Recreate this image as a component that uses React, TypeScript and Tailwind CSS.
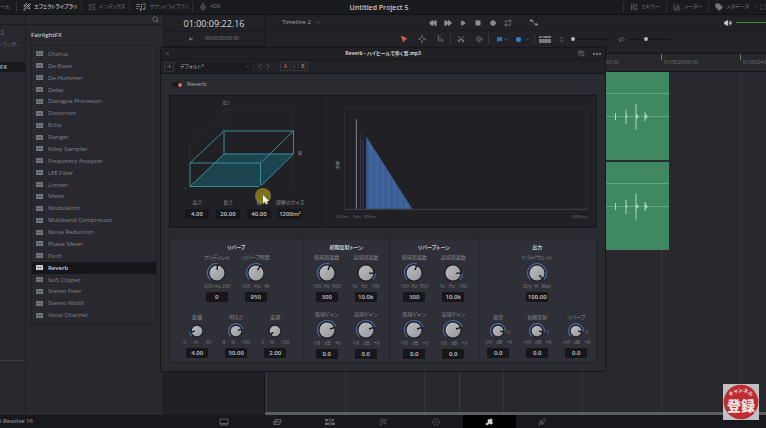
import React, { useId } from "react";
import {
  ChevronDown,
  ChevronLeft,
  ChevronRight,
  ChevronsUpDown,
  Circle,
  CodeXml,
  FastForward,
  History,
  ListOrdered,
  Magnet,
  Maximize,
  Mic,
  MousePointer2,
  Play,
  Plus,
  Repeat,
  Rewind,
  Rocket,
  Scissors,
  Search,
  SkipForward,
  SlidersVertical,
  Square,
  Tag,
  Volume2,
  WandSparkles,
  X,
  BarChart3,
  Music,
} from "lucide-react";

const effects = [
  "Chorus", "De-Esser", "De-Hummer", "Delay", "Dialogue Processor", "Distortion", "Echo", "Flanger",
  "Foley Sampler", "Frequency Analyzer", "LFE Filter", "Limiter", "Meter", "Modulation",
  "Multiband Compressor", "Noise Reduction", "Phase Meter", "Pitch", "Reverb", "Soft Clipper",
  "Stereo Fixer", "Stereo Width", "Vocal Channel",
];

function point(c: number, r: number, deg: number) {
  const a = (deg * Math.PI) / 180;
  return [c + r * Math.sin(a), c - r * Math.cos(a)];
}

function Dial({ small, angle, from = -135 }: { small?: boolean; angle: number; from?: number }) {
  const c = small ? 9 : 11;
  const r = small ? 5.7 : 7.9;
  const lo = Math.min(from, angle);
  const hi = Math.max(from, angle);
  const [x1, y1] = point(c, r + 1.6, lo);
  const [x2, y2] = point(c, r + 1.6, hi);
  const [px, py] = point(c, r + 0.6, angle);
  const [qx, qy] = point(c, r * 0.4, angle);
  const id = useId();
  return (
    <svg viewBox={`0 0 ${c * 2} ${c * 2}`} className={small ? "size-[18px]" : "size-[22px]"} aria-hidden="true">
      <defs>
        <linearGradient id={id} x1="0" y1="0" x2="1" y2="1">
          <stop offset="0" stopColor="#bcbec0" />
          <stop offset="1" stopColor="#96989b" />
        </linearGradient>
      </defs>
      <circle cx={c} cy={c} r={r + 0.8} fill="#1b1c22" />
      {hi - lo > 2 && (
        <path
          d={`M${x1} ${y1}A${r + 1.6} ${r + 1.6} 0 ${hi - lo > 180 ? 1 : 0} 1 ${x2} ${y2}`}
          fill="none"
          stroke="#4d6fae"
          strokeWidth="1.1"
        />
      )}
      <circle cx={c} cy={c} r={r - 0.4} fill={`url(#${id})`} />
      <path d={`M${px} ${py}L${qx} ${qy}`} stroke="#15161a" strokeWidth="1.4" />
    </svg>
  );
}

type KnobProps = {
  label: string;
  scale: [string, string, string];
  value: string;
  angle: number;
  from?: number;
  small?: boolean;
  mark?: string;
};

function Knob({ label, scale, value, angle, from, small, mark }: KnobProps) {
  const id = useId();
  return (
    <div className="flex w-[39px] flex-col items-center">
      <label htmlFor={id} className="h-2 text-[5px] leading-[8px] whitespace-nowrap text-[#8b8c92]">
        {label}
      </label>
      <div className="relative mt-px">
        <Dial small={small} angle={angle} from={from} />
        {mark && <span className="absolute top-2 left-full text-[5px] leading-[5px] text-[#74757b]">{mark}</span>}
      </div>
      <div className="flex h-[5px] w-7 justify-between text-[5px] leading-[5px] text-[#7b7c82]">
        {scale.map((s) => (
          <span key={s}>{s}</span>
        ))}
      </div>
      <input
        id={id}
        defaultValue={value}
        className="mt-[3px] h-2.5 w-[22px] rounded-[1px] bg-[#17171b] text-center text-[6px] font-semibold text-[#c6c7ca]"
      />
    </div>
  );
}

function Section({ title, top, bottom, tall }: { title: string; top: KnobProps[]; bottom: KnobProps[]; tall?: boolean }) {
  return (
    <section className="border-l border-[#222329] pt-0.5 first:border-l-0">
      <h3 className="text-center text-[5px] leading-[12px] font-semibold text-[#c9cacd]">{title}</h3>
      <div className="flex justify-center">
        {top.map((k) => (
          <Knob key={k.label} {...k} />
        ))}
      </div>
      <div className={tall ? "mt-2 flex justify-center" : "mt-[11px] flex justify-center"}>
        {bottom.map((k) => (
          <Knob key={k.label} {...k} small={!tall} />
        ))}
      </div>
    </section>
  );
}

const toneTop: KnobProps[] = [
  { label: "低域周波数", scale: ["160", "Hz", "500"], value: "300", angle: 20 },
  { label: "高域周波数", scale: ["1k", "Hz", "16k"], value: "10.0k", angle: 92, from: 135 },
];
const toneBottom: KnobProps[] = [
  { label: "低域ゲイン", scale: ["-18", "dB", "+6"], value: "0.0", angle: 72 },
  { label: "高域ゲイン", scale: ["-18", "dB", "+6"], value: "0.0", angle: 72 },
];

function TabButton({ icon, label, active }: { icon: React.ReactNode; label: string; active?: boolean }) {
  return (
    <button
      className={
        "flex h-2.5 items-center gap-[3px] border-l border-[#303136] pr-1 pl-1.5 text-[5px] whitespace-nowrap " +
        (active ? "font-medium text-[#c8c9cc]" : "text-[#75767b]")
      }
    >
      {icon}
      {label}
    </button>
  );
}

function SoundLibraryIcon() {
  return (
    <svg viewBox="0 0 10 8" className="h-2 w-2.5" fill="none" stroke="currentColor" strokeWidth=".9" aria-hidden="true">
      <path d="M0 1.500h4.500M0 3.500h4M0 5.500h2.500M5.500 6.500V1.500l3.500-.8v5" />
      <circle cx="4.700" cy="6.600" r=".8" fill="currentColor" />
      <circle cx="8.200" cy="5.900" r=".8" fill="currentColor" />
    </svg>
  );
}

function TopBar() {
  return (
    <header className="grid h-[15px] shrink-0 grid-cols-[1fr_auto_1fr] items-center border-b border-[#111215] bg-[#1a1b1e]">
      <nav className="flex items-center">
        <span className="w-4 text-[5px] text-[#75767b]">ール</span>
        <TabButton active icon={<WandSparkles className="size-2" />} label="エフェクトライブラリ" />
        <TabButton icon={<ListOrdered className="size-2" />} label="インデックス" />
        <TabButton icon={<SoundLibraryIcon />} label="サウンドライブラリ" />
        <TabButton icon={<Mic className="size-2" />} label="ADR" />
      </nav>
      <h1 className="pr-2 text-[7px] leading-none font-semibold text-[#c8c9cc]">Untitled Project 5</h1>
      <nav className="flex items-center justify-end gap-x-0.5">
        <TabButton icon={<SlidersVertical className="size-2" />} label="ミキサー" />
        <TabButton icon={<BarChart3 className="size-2" />} label="メーター" />
        <TabButton icon={<Tag className="size-2 fill-current" />} label="メタデータ" />
        <button aria-label="全画面" className="border-l border-[#303136] pl-1 text-[#75767b]">
          <Maximize className="size-1.5" />
        </button>
      </nav>
    </header>
  );
}

function EffectsLibrary() {
  return (
    <>
      <aside className="flex w-[26px] shrink-0 flex-col overflow-hidden border-r border-[#1d1d22] text-[5px] text-[#76777d]">
        <div className="h-2.5 shrink-0 border-b border-[#1d1d22]" />
        <span className="mt-px h-3 leading-[12px]">ス</span>
        <span className="h-3 leading-[12px] whitespace-nowrap">・ラング...</span>
        <span className="mt-3 h-2.5 bg-[#1a1a1e] text-[6px] leading-[10px] font-semibold text-[#c8c9cc]">FX</span>
        <div className="mt-[288px] border-t border-[#3b3c43]" />
      </aside>
      <aside className="flex w-[138px] shrink-0 flex-col border-r border-[#1a1a1f]">
        <div className="flex h-2.5 shrink-0 items-center justify-end border-b border-[#1d1d22] pr-1">
          <button aria-label="検索" className="text-[#8b8c92]">
            <Search className="size-[7px]" />
          </button>
        </div>
        <h2 className="mt-1 pl-[5px] text-[6px] leading-[12px] font-semibold text-[#c8c9cc]">FairlightFX</h2>
        <ul className="mt-1 mr-1.5 ml-[5px] flex h-[279px] flex-col border border-[#1d1d22] py-[2px]">
          {effects.map((name) => {
            const on = name === "Reverb";
            return (
              <li key={name} className="flex min-h-0 flex-1">
                <button
                  className={
                    "flex flex-1 items-center gap-[5px] pl-1 text-[6px] leading-none whitespace-nowrap " +
                    (on ? "bg-[#16161a] font-semibold text-[#d2d3d6]" : "text-[#85868c]")
                  }
                >
                  <svg viewBox="0 0 7 5" className="h-[5px] w-[7px]" aria-hidden="true">
                    <rect width="7" height="5" rx=".5" fill={on ? "#d2d3d6" : "#777980"} />
                    <path d="M1 2.500h1M2.500 1.300v2.400M3.500 2v1M4.500 1.300v2.400M5.200 2.500H6" stroke="#36373d" strokeWidth=".5" />
                  </svg>
                  {name}
                </button>
              </li>
            );
          })}
        </ul>
      </aside>
    </>
  );
}

function ToolButton({ label, children, className = "w-[15px]" }: { label: string; children: React.ReactNode; className?: string }) {
  return (
    <button aria-label={label} className={"flex shrink-0 items-center justify-center " + className}>
      {children}
    </button>
  );
}

const range =
  "h-2 appearance-none bg-[linear-gradient(#17171b,#17171b)] bg-[length:100%_1px] bg-center bg-no-repeat [&::-webkit-slider-thumb]:size-1 [&::-webkit-slider-thumb]:appearance-none [&::-webkit-slider-thumb]:rounded-full [&::-webkit-slider-thumb]:bg-[#b7b8bb]";

function Toolbars() {
  return (
    <div className="flex h-8 shrink-0 bg-[#222226]">
      <div className="flex w-[101px] flex-col items-center border-r border-b border-[#18181c]">
        <div className="flex h-[17px] w-full items-center justify-center border-b border-[#1b1b1f] text-[9px] leading-none font-medium text-[#d6d7da]">
          01:00:09:22.16
        </div>
        <div className="flex flex-1 items-center gap-3 text-[5px] text-[#84858a]">
          <SkipForward className="size-1 fill-current" />
          00:00:00:00.00
        </div>
      </div>
      <div className="flex min-w-0 flex-1 flex-col text-[#8e8f94]">
        <div className="flex h-4 items-center border-b border-[#1b1b1f]">
          <button className="ml-[17px] flex w-[143px] items-center gap-1 text-[6px] text-[#a4a5aa]">
            Timeline 2 <ChevronDown className="size-[5px]" />
          </button>
          <ToolButton label="巻き戻し"><Rewind className="size-2 fill-current" /></ToolButton>
          <ToolButton label="早送り"><FastForward className="size-2 fill-current" /></ToolButton>
          <ToolButton label="再生"><Play className="size-1.5 fill-current" /></ToolButton>
          <ToolButton label="停止"><Square className="size-1.5 fill-current" /></ToolButton>
          <ToolButton label="録音"><Circle className="size-1.5 fill-current" /></ToolButton>
          <ToolButton label="ループ"><Repeat className="size-2" /></ToolButton>
          <ToolButton label="オートメーション" className="w-9">
            <svg viewBox="0 0 11 7" className="h-[7px] w-[11px]">
              <path d="M1.500 1.500H4C6 1.500 5.500 5.500 7.500 5.500H10" fill="none" stroke="currentColor" strokeWidth=".7" />
              <circle cx="3.300" cy="1.500" r="1.200" fill="currentColor" />
              <circle cx="8.300" cy="5.500" r="1.200" fill="currentColor" />
            </svg>
          </ToolButton>
          <button aria-label="ミュート" className="mr-1 ml-auto text-[#d6d7da]">
            <Volume2 className="size-2 fill-current" />
          </button>
          <div className="h-px w-[30px] bg-[#3c8a36]" />
        </div>
        <div className="flex h-4 items-center">
          <ToolButton label="選択" className="ml-[130px] w-[18px] text-[#e0604a]"><MousePointer2 className="size-2 fill-current" /></ToolButton>
          <ToolButton label="範囲" className="w-[18px]">
            <svg viewBox="0 0 8 8" className="size-2"><path d="M4 0v3M4 5v3M0 4h3M5 4h3" stroke="currentColor" strokeWidth=".9" /></svg>
          </ToolButton>
          <ToolButton label="編集" className="w-[18px]">
            <svg viewBox="0 0 8 8" className="size-2 opacity-60">
              <path d="M1 1h4M1 3.500h3M2.500 1v5h2M5 3l2.500 2.500-1.500.3L5.500 7z" fill="none" stroke="currentColor" strokeWidth=".8" />
            </svg>
          </ToolButton>
          <div className="mx-px h-2.5 w-px bg-[#393a40]" />
          <ToolButton label="カット" className="w-[18px]"><Scissors className="size-2 -rotate-90" /></ToolButton>
          <ToolButton label="スナップ" className="w-[18px]"><Magnet className="size-[7px] rotate-[270deg]" /></ToolButton>
          <div className="h-2.5 w-px bg-[#393a40]" />
          <ToolButton label="フラグ" className="ml-1.5 w-2">
            <svg viewBox="0 0 5 5" className="size-[5px]"><path d="M0 0h5v5L2.500 3.500 0 5z" fill="#2f74b8" /></svg>
          </ToolButton>
          <ChevronDown className="size-[5px]" />
          <ToolButton label="マーカー" className="ml-1.5 w-2"><span className="size-[5px] rounded-[2px] bg-[#2f7fd0]" /></ToolButton>
          <ChevronDown className="ml-[3px] size-[5px]" />
          <div className="mx-1 h-2.5 w-px bg-[#393a40]" />
          <ToolButton label="表示" className="w-3">
            <svg viewBox="0 0 12 7" className="h-[7px] w-3"><path d="M0 0h3v2H0zM4 0h8v2H4zM0 3h12v4H0z" fill="#777980" /></svg>
          </ToolButton>
          <ToolButton label="高さ" className="mx-1.5 w-2"><ChevronsUpDown className="size-[7px]" /></ToolButton>
          <input type="range" aria-label="縦ズーム" defaultValue={0} className={"w-10 " + range} />
          <ToolButton label="幅" className="mx-1.5 w-2"><CodeXml className="size-[7px]" /></ToolButton>
          <input type="range" aria-label="横ズーム" defaultValue={36} className={"w-10 " + range} />
        </div>
      </div>
    </div>
  );
}

function Clip() {
  return (
    <div className="h-[88px] w-[129px] bg-[#3f8862]">
      <svg viewBox="0 0 129 88" className="block h-full w-full" aria-hidden="true">
        <path d="M0 21.500h129M0 44.500h129" stroke="#63a581" strokeWidth="1" />
        <path d="M75.500 41v7M86 38v14M96 31.500v26M105 40v9" stroke="#a5dcbb" strokeWidth="1" />
        <path d="M96 41.500l3 3-3 3zM105 41.500l3 3-3 3zM86 42l1.500 2.500-1.500 2.500z" fill="#a5dcbb" />
      </svg>
    </div>
  );
}

const ticks = ["01:00:00:00.00", "01:00:04:00.00", "01:00:08:00.00", "01:00:12:00.00", "01:00:16:00.00", "01:00:20:00.00", "01:00:24:00.00"];

function Timeline() {
  return (
    <div className="flex min-h-0 flex-1">
      <div className="w-[101px] shrink-0 border-r border-[#18181c] bg-[#212125]" />
      <div className="relative flex min-w-0 flex-1 flex-col overflow-hidden">
        <div className="h-[7px] shrink-0 border-b border-[#151519] bg-[#222226]" />
        <div className="flex h-[18px] shrink-0 border-b border-[#18181c] bg-[#27272c] pl-px">
          {ticks.map((t) => (
            <div key={t} className="w-[79px] shrink-0 pt-1">
              <div className="flex gap-[2px] text-[5px] leading-[8px] text-[#77787e]">
                <span className="-mt-1 h-1.5 w-px bg-[#77787e]" />
                {t}
              </div>
            </div>
          ))}
        </div>
        <div className="flex flex-1 flex-col gap-0.5 bg-[repeating-linear-gradient(90deg,#35363c_0_1px,transparent_1px_79px)] bg-[position:1px_0] pl-[275px]">
          <Clip />
          <Clip />
        </div>
        <div className="h-[3px] shrink-0 bg-[#5c5d63]" />
        <div className="absolute top-0 bottom-[3px] left-[194px] w-px bg-[#5e2b32]" />
      </div>
    </div>
  );
}

function RoomView() {
  const dims = [
    ["高さ", "4.00"],
    ["長さ", "20.00"],
    ["幅", "40.00"],
    ["部屋のサイズ", "1200m²"],
  ];
  return (
    <div className="relative flex flex-col">
      <svg viewBox="0 0 151 101" className="h-[101px] w-full" aria-hidden="true">
        <path d="M54 35V14H123V35M20 67V46L54 14M123 58V93" fill="none" stroke="#2c2d33" strokeWidth=".7" />
        <path d="M54 58H123.500L90.500 90.500H20z" fill="#1c444f" />
        <path
          d="M54 35H123.500V58H54zM20 67H90.500V90.500H20zM54 35L20 67M123.500 35L90.500 67M54 58L20 90.500M123.500 58L90.500 90.500"
          fill="none"
          stroke="#3b98a2"
          strokeWidth=".9"
        />
        <circle cx="54" cy="35" r="1.300" fill="#17181c" stroke="#43a3ad" strokeWidth=".5" />
        <circle cx="90.500" cy="90.500" r="1.200" fill="#17181c" />
        <g fill="#8a8b90" fontSize="4" textAnchor="middle">
          <text x="56" y="9">高さ</text>
          <text x="130" y="59">幅</text>
        </g>
        <path d="M15 92l1 1.500" stroke="#66676d" strokeWidth=".7" />
      </svg>
      <div className="flex justify-center pr-1">
        {dims.map(([label, value], i) => (
          <div key={label} className="flex w-[31px] flex-col items-center">
            <label htmlFor={"dim" + i} className="text-[5px] leading-[10px] whitespace-nowrap text-[#8c8d92]">
              {label}
            </label>
            <input
              id={"dim" + i}
              defaultValue={value}
              className="mt-0.5 h-2.5 w-6 rounded-[1px] bg-[#17171b] text-center text-[6px] font-semibold text-[#c6c7ca]"
            />
          </div>
        ))}
      </div>
      <svg viewBox="0 0 18 18" className="absolute top-[91px] left-[84px] size-[18px]" aria-hidden="true">
        <circle cx="9" cy="9" r="8" fill="#a3951f" opacity=".7" />
        <path d="M9 8v8l2-1.500 1.500 3 1.300-.6-1.400-2.900H15z" fill="#f4f4f4" />
      </svg>
    </div>
  );
}

function DecayChart() {
  const lines = [];
  for (let x = 46; x < 90; x += 2) lines.push(x);
  return (
    <div className="border-l border-[#18181c]">
      <svg viewBox="0 0 275 131" className="h-[131px] w-full" role="img" aria-label="残響">
        <path d="M22.500 113V11.500H266.500V113" fill="none" stroke="#2d2e34" />
        <path d="M22 113.500H267" stroke="#4b4c52" strokeWidth=".8" />
        <path d="M34.500 23V113" stroke="#77787c" strokeWidth="1.200" />
        <path d="M38.500 38V113M41 43V113" stroke="#35374a" strokeWidth="1.200" />
        <path d="M44.500 40.500L90.500 113H44.500z" fill="#3f6199" />
        {lines.map((x, i) => (
          <path
            key={x}
            d={`M${x} ${41 + (x - 44.5) * 1.58}V113`}
            stroke={i % 3 === 0 ? "#34507e" : "#4a6da4"}
            strokeWidth=".6"
          />
        ))}
        <g fill="#6f7076" fontSize="4" textAnchor="middle">
          <text x="20" y="122">-200ms</text>
          <text x="35" y="122">0ms</text>
          <text x="48" y="122">200ms</text>
          <text x="259" y="122">4000ms</text>
          <text transform="translate(17.500 69) rotate(-90)" fill="#97989d">音量</text>
        </g>
      </svg>
    </div>
  );
}

function ReverbWindow() {
  return (
    <section className="absolute top-8 -left-1 w-[446px] max-w-full border border-[#17171b] bg-[#2a2a31]">
      <div className="grid h-3 grid-cols-[1fr_auto_1fr] items-center border-b border-[#17171b] bg-[#212125] text-[#8e8f94]">
        <button aria-label="閉じる" className="pl-1"><X className="size-[5px]" /></button>
        <h2 className="text-[5px] leading-none font-bold text-[#d0d1d4]">Reverb - ハイヒールで歩く音.mp3</h2>
        <div className="flex items-center justify-end gap-2 pr-1">
          <button aria-label="履歴"><History className="size-[7px]" /></button>
          <button aria-label="メニュー" className="flex gap-px">
            <i className="size-0.5 rounded-full bg-current" />
            <i className="size-0.5 rounded-full bg-current" />
            <i className="size-0.5 rounded-full bg-current" />
          </button>
        </div>
      </div>
      <div className="flex h-3.5 items-center border-b border-[#17171b] bg-[#222226] pl-[3px] text-[#8e8f94]">
        <button aria-label="追加" className="flex size-2.5 items-center justify-center border border-[#34353a]"><Plus className="size-[5px]" /></button>
        <div className="relative ml-0.5 flex h-2.5 w-[76px] items-center bg-[#1c1c20]">
          <select aria-label="プリセット" className="h-full w-full appearance-none bg-transparent pl-1 text-[5px] text-[#a9aaae]">
            <option>デフォルト*</option>
          </select>
          <ChevronDown className="pointer-events-none absolute right-0.5 size-[5px]" />
        </div>
        <button aria-label="前へ" className="ml-1"><ChevronLeft className="size-[7px]" /></button>
        <button aria-label="次へ" className="ml-0.5"><ChevronRight className="size-[7px]" /></button>
        <div className="ml-2 flex h-[9px] items-center border border-[#34353a] text-[5px] font-semibold">
          <button className="w-[9px] text-[#cf5a48]">A</button>
          <button aria-label="コピー" className="flex w-[9px] justify-center border-x border-[#34353a]"><ChevronRight className="size-[5px]" /></button>
          <button className="w-[8px]">B</button>
        </div>
      </div>
      <div className="px-2 pb-2">
        <label className="flex h-[21px] items-center gap-[5px] pl-[3px] text-[6px] text-[#a9aaae]">
          <span className="flex h-[5px] w-2.5 items-center justify-end rounded-full bg-[#18181c]">
            <input type="checkbox" defaultChecked className="size-1 appearance-none rounded-full bg-[#6b3b31] checked:bg-[#d5755f]" />
          </span>
          Reverb
        </label>
        <div className="grid h-[133px] grid-cols-[151px_1fr] border border-[#18181c] bg-[#212125]">
          <RoomView />
          <DecayChart />
        </div>
        <div className="mt-[10px] grid h-[125px] grid-cols-[133fr_87fr_89fr_119fr] border border-[#222329] bg-[#2f3037]">
          <Section
            title="リバーブ"
            top={[
              { label: "プリディレイ", scale: ["-200", "ms", "200"], value: "0", angle: 3 },
              { label: "リバーブ時間", scale: ["100", "ms", "4k"], value: "950", angle: 30 },
            ]}
            bottom={[
              { label: "距離", scale: ["0", "m", "30"], value: "4.00", angle: -98 },
              { label: "明るさ", scale: ["4", "%", "100"], value: "50.00", angle: 72 },
              { label: "変調", scale: ["0", "%", "100"], value: "2.00", angle: -128 },
            ]}
          />
          <Section title="初期反射トーン" top={toneTop} bottom={toneBottom} tall />
          <Section title="リバーブトーン" top={toneTop} bottom={toneBottom} tall />
          <Section
            title="出力"
            top={[{ label: "ドライ/ウェット", scale: ["Dry", "%", "Max"], value: "100.00", angle: 135 }]}
            bottom={[
              { label: "原音", scale: ["-inf", "dB", "+6"], value: "0.0", angle: 98, mark: "0" },
              { label: "初期反射", scale: ["-inf", "dB", "+6"], value: "0.0", angle: 98, mark: "0" },
              { label: "リバーブ", scale: ["-inf", "dB", "+6"], value: "0.0", angle: 98, mark: "0" },
            ]}
          />
        </div>
      </div>
    </section>
  );
}

const glyph = "h-2 w-[10px]";

function MediaIcon() {
  return (
    <svg viewBox="0 0 10 8" className={glyph} fill="none" stroke="currentColor" strokeWidth=".8">
      <rect x="1" y="1" width="8" height="6" rx=".5" />
      <path d="M1 5.500h8M3 5.500V7M5 5.500V7M7 5.500V7" />
    </svg>
  );
}

function CutIcon() {
  return (
    <svg viewBox="0 0 10 8" className={glyph} fill="none" stroke="currentColor" strokeWidth=".9">
      <path d="M3 1.500h6L7.500 6.500h-6zM5 1.500L3.500 6.500M.5 4h9" />
    </svg>
  );
}

function EditIcon() {
  return (
    <svg viewBox="0 0 10 8" className={glyph} fill="currentColor">
      <path d="M0 1h3.500v2H0zM6.500 1H9v2H6.500zM0 4.500h4v2.500H0zM6 4.500h4v2.500H6zM4.600 0h.9v8h-.9z" />
    </svg>
  );
}

function ColorIcon() {
  return (
    <svg viewBox="0 0 8 8" className="size-2" fill="none" stroke="currentColor">
      <circle cx="4" cy="4" r="3.200" strokeWidth="1" strokeDasharray="1.300 .7" />
      <circle cx="4" cy="4" r=".8" fill="currentColor" stroke="none" />
    </svg>
  );
}

const pages = [
  { name: "メディア", icon: <MediaIcon /> },
  { name: "カット", icon: <CutIcon /> },
  { name: "エディット", icon: <EditIcon /> },
  { name: "Fusion", icon: <WandSparkles className="size-2" /> },
  { name: "カラー", icon: <ColorIcon /> },
  { name: "Fairlight", icon: <Music className="size-2 fill-current" /> },
  { name: "デリバー", icon: <Rocket className="size-2" /> },
];

function SubscribeBadge() {
  return (
    <button aria-label="チャンネル登録" className="absolute right-[7px] bottom-2 size-9 bg-[#c3c0c3]">
      <svg viewBox="0 0 36 36" className="size-9">
        <defs>
          <path id="badge-arc" d="M5 17A14 14 0 0 1 31 17" />
        </defs>
        <circle cx="18" cy="18" r="17.300" fill="#bd2c30" />
        <g fill="#ece3e6" textAnchor="middle">
          <text fontSize="5" fontWeight="700">
            <textPath href="#badge-arc" startOffset="50%">チャンネル</textPath>
          </text>
          <text x="18" y="27" fontSize="14" fontWeight="900">登録</text>
        </g>
      </svg>
    </button>
  );
}

export default function App() {
  return (
    <div className="relative flex h-screen flex-col overflow-hidden bg-[#28282e] font-['Open_Sans','Noto_Sans_CJK_JP',sans-serif] [font-feature-settings:'palt']">
      <TopBar />
      <div className="flex min-h-0 flex-1">
        <EffectsLibrary />
        <main className="relative flex min-w-0 flex-1 flex-col">
          <Toolbars />
          <Timeline />
          <ReverbWindow />
        </main>
      </div>
      <footer className="grid h-[13px] shrink-0 grid-cols-[1fr_auto_1fr] items-center bg-[#18191c]">
        <span className="text-[6px] text-[#a9aaae]">i Resolve 16</span>
        <nav className="flex h-[13px]">
          {pages.map(({ name, icon }) => (
            <button
              key={name}
              aria-label={name}
              className={
                "flex w-[53px] items-center justify-center " +
                (name === "Fairlight" ? "bg-black text-[#c8d6d2]" : "text-[#66676c]")
              }
            >
              {icon}
            </button>
          ))}
        </nav>
      </footer>
      <SubscribeBadge />
    </div>
  );
}
